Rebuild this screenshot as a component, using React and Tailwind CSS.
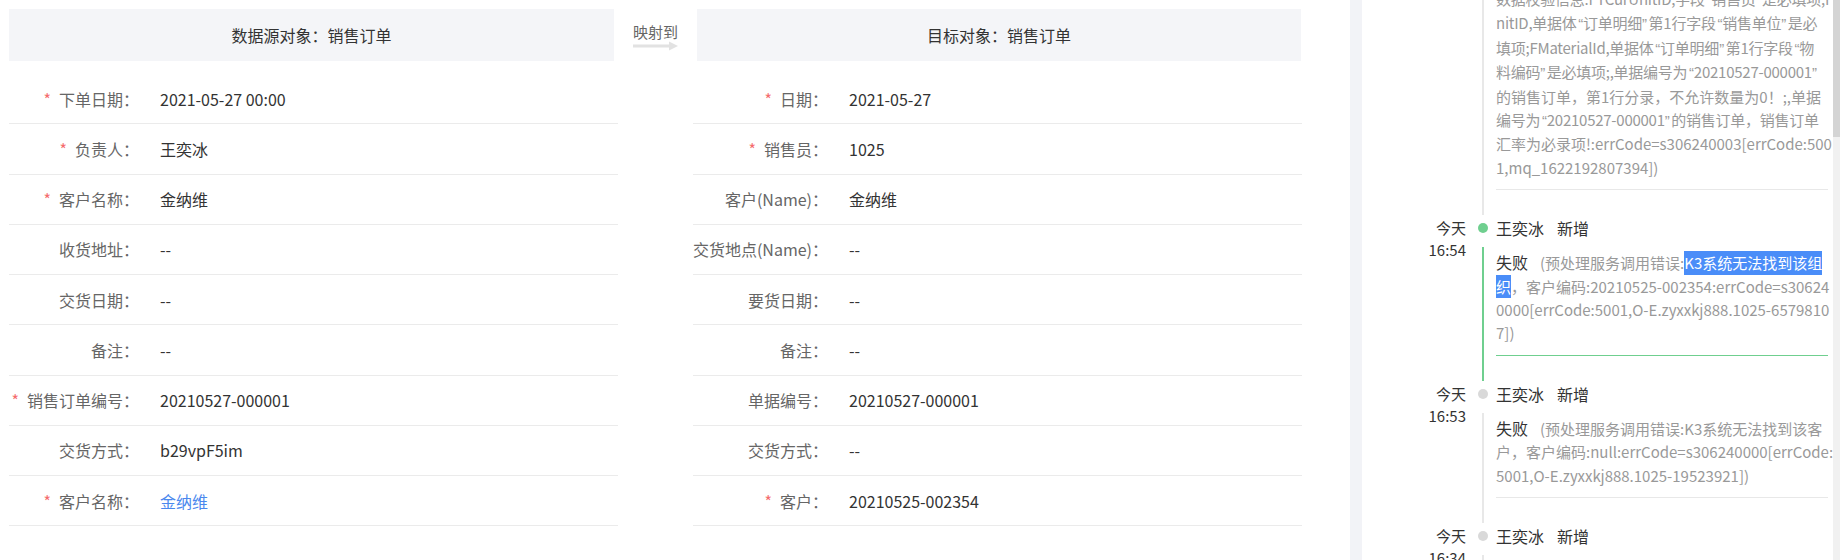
import React from "react";

const leftRows = [
  { req: true, label: "下单日期", value: "2021-05-27 00:00" },
  { req: true, label: "负责人", value: "王奕冰" },
  { req: true, label: "客户名称", value: "金纳维" },
  { req: false, label: "收货地址", value: "--" },
  { req: false, label: "交货日期", value: "--" },
  { req: false, label: "备注", value: "--" },
  { req: true, label: "销售订单编号", value: "20210527-000001" },
  { req: false, label: "交货方式", value: "b29vpF5im" },
  { req: true, label: "客户名称", value: "金纳维", link: true },
];

const rightRows = [
  { req: true, label: "日期", value: "2021-05-27" },
  { req: true, label: "销售员", value: "1025" },
  { req: false, label: "客户(Name)", value: "金纳维" },
  { req: false, label: "交货地点(Name)", value: "--" },
  { req: false, label: "要货日期", value: "--" },
  { req: false, label: "备注", value: "--" },
  { req: false, label: "单据编号", value: "20210527-000001" },
  { req: false, label: "交货方式", value: "--" },
  { req: true, label: "客户", value: "20210525-002354" },
];

function Row({ row, labelWidth }) {
  return (
    <div className="flex items-center h-[50.25px] border-b border-[#ebebeb]">
      <div
        className={
          "flex shrink-0 justify-end items-center text-[#666] text-[16px] leading-[22px] " +
          labelWidth
        }
      >
        {row.req && <span className="text-[#f56c6c] mr-[8px] leading-[22px]">*</span>}
        <span className="whitespace-nowrap">{row.label}：</span>
      </div>
      <div
        className={
          "ml-[21px] text-[16px] leading-[22px] whitespace-nowrap " +
          (row.link ? "text-[#4a88ee]" : "text-[#333]")
        }
      >
        {row.value}
      </div>
    </div>
  );
}

function Panel({ title, rows, side }) {
  const left = side === "left";
  return (
    <div className="w-[609px] shrink-0 flex flex-col">
      <div
        className={
          "h-[52px] bg-[#f4f5f8] flex items-center justify-center text-[16px] text-[#333] " +
          (left ? "mr-[4px]" : "ml-[4px] mr-[1px]")
        }
      >
        {title}
      </div>
      <div className="mt-[13px] flex flex-col">
        {rows.map((r, i) => (
          <Row key={i} row={r} labelWidth={left ? "w-[130px]" : "w-[135px]"} />
        ))}
      </div>
    </div>
  );
}

function LQ() {
  return (
    <span className="inline-block w-[6.5px] text-right font-['Liberation_Sans',sans-serif]">“</span>
  );
}
function RQ() {
  return (
    <span className="inline-block w-[6.5px] text-left font-['Liberation_Sans',sans-serif]">”</span>
  );
}

function q(str) {
  const out = [];
  let buf = "";
  let k = 0;
  for (const ch of str) {
    if (ch === "“" || ch === "”") {
      if (buf) out.push(<React.Fragment key={k++}>{buf}</React.Fragment>);
      buf = "";
      out.push(ch === "“" ? <LQ key={k++} /> : <RQ key={k++} />);
    } else {
      buf += ch;
    }
  }
  if (buf) out.push(<React.Fragment key={k++}>{buf}</React.Fragment>);
  return out;
}

function Line({ children, tight }) {
  return (
    <div
      className={
        "whitespace-nowrap leading-[23.4px] text-[15px] text-[#999] " +
        (tight ? "tracking-[-0.25px]" : "")
      }
    >
      {children}
    </div>
  );
}

function Fail({ children }) {
  return (
    <>
      <span className="text-[16px] text-[#333]">失败</span>
      <span className="ml-[12px]">{children}</span>
    </>
  );
}

function Sel({ children }) {
  return <span className="inline-block bg-[#4a8df8] text-white leading-[23.4px]">{children}</span>;
}

function Item({ time, color, lineColor, dividerColor, lines }) {
  return (
    <div className="flex">
      <div className="w-[104px] shrink-0 text-right text-[15px] leading-[22px] text-[#333]">
        <div>今天</div>
        <div>{time}</div>
      </div>
      <div className="w-[30px] shrink-0 pl-[4px] flex flex-col items-center">
        <div className="h-[22px] flex items-center">
          <div className={"w-[10px] h-[10px] rounded-full " + color}></div>
        </div>
        <div className={"w-[2px] flex-1 mt-[8px] mb-[2px] " + lineColor}></div>
      </div>
      <div className="w-[332px] shrink-0 pb-[27px]">
        <div className="text-[16px] leading-[22px] text-[#333] whitespace-nowrap">
          <span>王奕冰</span>
          <span className="ml-[13px]">新增</span>
        </div>
        <div className={"mt-[12px] pb-[10px] border-b " + dividerColor}>
          {lines.map((l, i) => (
            <Line key={i}>{l}</Line>
          ))}
        </div>
      </div>
    </div>
  );
}

export default function App() {
  return (
    <div className="w-[1840px] h-[560px] bg-white overflow-hidden flex font-['Noto_Sans_CJK_SC',sans-serif]">
      <div className="w-[1350px] shrink-0 flex items-start pt-[9px] pl-[9px]">
        <Panel title="数据源对象：销售订单" rows={leftRows} side="left" />
        <div className="w-[75px] shrink-0 flex flex-col items-center pt-[13px]">
          <div className="text-[15px] leading-[19px] text-[#666] whitespace-nowrap">映射到</div>
          <svg width="45" height="10" viewBox="0 0 45 10" className="block">
            <rect x="0" y="3.5" width="37" height="3" fill="#e2e2e2" />
            <polygon points="36,0.5 45,5 36,9.5" fill="#e2e2e2" />
          </svg>
        </div>
        <Panel title="目标对象：销售订单" rows={rightRows} side="right" />
      </div>
      <div className="w-[12px] shrink-0 h-full bg-[#f2f3f7]"></div>
      <div className="flex-1 flex h-full">
        <div className="flex-1 overflow-hidden">
          <div className="-mt-[13px]">
            <div className="flex">
              <div className="w-[104px] shrink-0"></div>
              <div className="w-[30px] shrink-0 pl-[4px] flex flex-col items-center">
                <div className="w-[2px] flex-1 mb-[2px] bg-[#e8e8e8]"></div>
              </div>
              <div className="w-[332px] shrink-0 pb-[27px]">
                <div className="pb-[10px] border-b border-[#e8e8e8]">
                  <Line tight>{q("数据校验信息:FTCurUnitID,字段“销售员”是必填项;FU")}</Line>
                  <Line tight>{q("nitID,单据体“订单明细”第1行字段“销售单位”是必")}</Line>
                  <Line tight>{q("填项;FMaterialId,单据体“订单明细”第1行字段“物")}</Line>
                  <Line tight>{q("料编码”是必填项;,单据编号为“20210527-000001”")}</Line>
                  <Line>的销售订单，第1行分录，不允许数量为0！;,单据</Line>
                  <Line tight>{q("编号为“20210527-000001”的销售订单，销售订单")}</Line>
                  <Line>汇率为必录项!:errCode=s306240003[errCode:500</Line>
                  <Line>1,mq_1622192807394])</Line>
                </div>
              </div>
            </div>
            <Item
              time="16:54"
              color="bg-[#6fcf8f]"
              lineColor="bg-[#6fcf8f]"
              dividerColor="border-[#6fcf8f]"
              lines={[
                <Fail>
                  (预处理服务调用错误:<Sel>K3系统无法找到该组</Sel>
                </Fail>,
                <>
                  <Sel>织</Sel>，客户编码:20210525-002354:errCode=s30624
                </>,
                <>0000[errCode:5001,O-E.zyxxkj888.1025-6579810</>,
                <>7])</>,
              ]}
            />
            <Item
              time="16:53"
              color="bg-[#d9d9d9]"
              lineColor="bg-[#e8e8e8]"
              dividerColor="border-[#e8e8e8]"
              lines={[
                <Fail>(预处理服务调用错误:K3系统无法找到该客</Fail>,
                <>户，客户编码:null:errCode=s306240000[errCode:</>,
                <>5001,O-E.zyxxkj888.1025-19523921])</>,
              ]}
            />
            <Item
              time="16:34"
              color="bg-[#d9d9d9]"
              lineColor="bg-[#e8e8e8]"
              dividerColor="border-[#e8e8e8]"
              lines={[
                <Fail>(预处理服务调用错误:K3系统无法找到该组</Fail>,
                <>织，客户编码:20210525-002354:errCode=s30624</>,
                <>0000[errCode:5001,O-E.zyxxkj888.1025-6579810</>,
              ]}
            />
          </div>
        </div>
        <div className="w-[7px] shrink-0 h-full bg-[#f1f1f1] flex flex-col">
          <div className="h-[137px] bg-[#d4d4d4]"></div>
        </div>
      </div>
    </div>
  );
}
